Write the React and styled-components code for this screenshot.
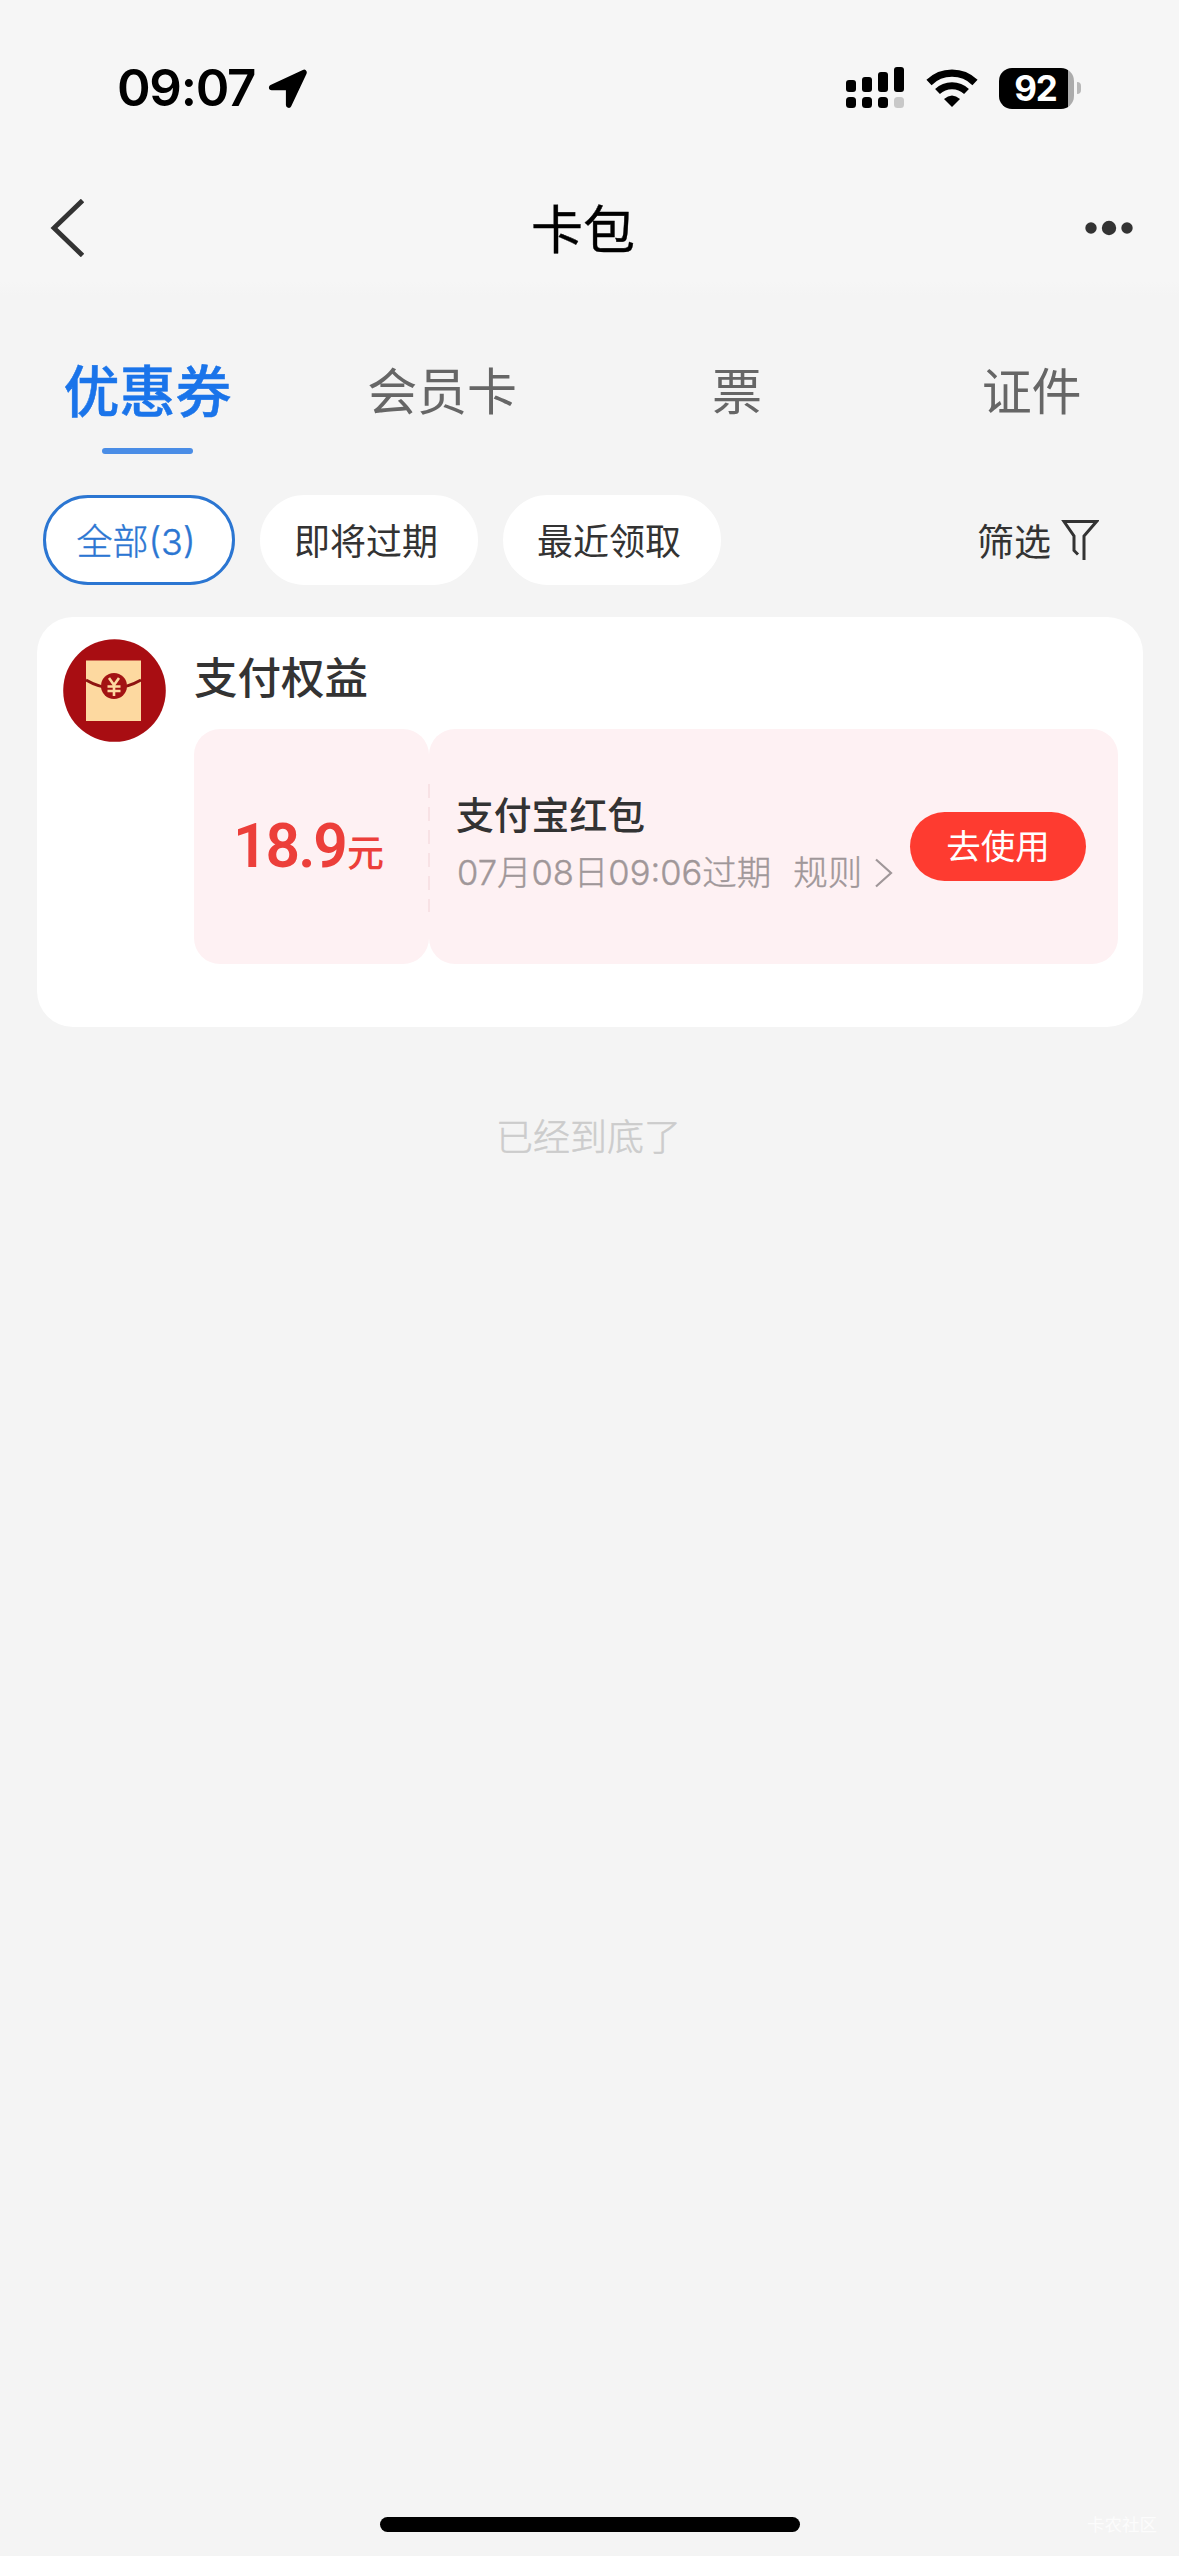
import styled, { createGlobalStyle } from "styled-components"

const tabs = ["优惠券", "会员卡", "票", "证件"]
const filters = ["全部(3)", "即将过期", "最近领取"]

const App = () => {
  return (
    <>
      <GlobalStyle />
      <Page>
        {/* Status bar */}
        <StatusBar>
          <Clock>09:07</Clock>
          <LocationIcon />
          <StatusRight>
            <SignalIcon />
            <WifiIcon />
            <Battery>
              <span>92</span>
            </Battery>
            <BatteryCap />
          </StatusRight>
        </StatusBar>

        {/* Title bar */}
        <NavBar>
          <svg width="34" height="58" viewBox="0 0 34 58" fill="none">
            <path d="M32.500 1.500L4 29L32.500 56.500" stroke="#333" strokeWidth="4.800" />
          </svg>
          <h1>卡包</h1>
          <svg width="50" height="16" viewBox="0 0 50 16" fill="#333">
            <circle cx="7" cy="8" r="5.700" />
            <circle cx="25" cy="8" r="7.200" />
            <circle cx="43" cy="8" r="5.700" />
          </svg>
        </NavBar>

        {/* Category tabs */}
        <Tabs>
          {tabs.map((tab, i) => (
            <Tab key={tab} $active={i === 0}>
              {tab}
            </Tab>
          ))}
        </Tabs>

        {/* Filter pills */}
        <Filters>
          {filters.map((name, i) => (
            <Pill key={name} $active={i === 0}>
              {name}
            </Pill>
          ))}
          <FilterButton>
            筛选
            <svg width="38" height="42" viewBox="0 0 38 42" fill="none">
              <path
                d="M17 35.500L13 31.500V17L3 2.500H35.500L23 17V41"
                stroke="#333"
                strokeWidth="3"
              />
            </svg>
          </FilterButton>
        </Filters>

        {/* Coupon card */}
        <Card>
          <EnvelopeLogo />
          <CardBody>
            <h2>支付权益</h2>
            <Coupon>
              <Amount>
                18.9<small>元</small>
              </Amount>
              <Detail>
                <Info>
                  <h3>支付宝红包</h3>
                  <Expiry>
                    <span>07月08日09:06过期</span>
                    <span>规则</span>
                    <svg width="20" height="30" viewBox="0 0 20 30" fill="none">
                      <path d="M2 1.500L17 15L2 28.500" stroke="#a09799" strokeWidth="2.200" />
                    </svg>
                  </Expiry>
                </Info>
                <UseButton>去使用</UseButton>
              </Detail>
            </Coupon>
          </CardBody>
        </Card>

        <EndNote>已经到底了</EndNote>

        <BottomBar>
          <HomeIndicator />
          <Mark>卡农社区</Mark>
        </BottomBar>
      </Page>
    </>
  )
}

const LocationIcon = () => (
  <svg width="40" height="41" viewBox="0 0 40 41">
    <path
      d="M3.700 19.500L36 4.500L20.700 37V19.500Z"
      fill="#000"
      stroke="#000"
      strokeWidth="5.600"
      strokeLinejoin="round"
    />
  </svg>
)

const SignalIcon = () => (
  <svg width="58" height="42" viewBox="0 0 58 42">
    <rect x="0" y="13" width="10" height="12" rx="3" />
    <rect x="16" y="10" width="10" height="15" rx="3" />
    <rect x="32" y="5" width="10" height="20" rx="3" />
    <rect x="48" y="0" width="10" height="25" rx="3" />
    <rect x="0" y="30" width="10" height="11" rx="3.500" />
    <rect x="16" y="30" width="10" height="11" rx="3.500" />
    <rect x="32" y="30" width="10" height="11" rx="3.500" />
    <rect x="48" y="30" width="10" height="11" rx="3.500" fill="#c8c8c8" />
  </svg>
)

const WifiIcon = () => (
  <svg width="52" height="38" viewBox="0 0 52 38" fill="none">
    <path d="M3 13.500A33 33 0 0 1 49 13.500" stroke="#000" strokeWidth="7.400" />
    <path d="M11.500 22.500A21 21 0 0 1 40.500 22.500" stroke="#000" strokeWidth="7" />
    <path d="M26 38L18 30Q26 23 34 30Z" fill="#000" />
  </svg>
)

const EnvelopeLogo = () => (
  <svg width="103" height="103" viewBox="0 0 103 103">
    <circle cx="51.500" cy="51.500" r="51.300" fill="#a80d12" />
    <rect x="23" y="21.500" width="55" height="60.500" fill="#fdd9a0" />
    <path d="M23 41Q50 57 78 41" fill="none" stroke="#8e1410" strokeWidth="3" />
    <circle cx="51" cy="47" r="13" fill="#a31313" />
    <path
      d="M46 39L51 46L56 39M51 46V57M44.500 47.500H57.500M44.500 52H57.500"
      fill="none"
      stroke="#fdd9a0"
      strokeWidth="2.600"
    />
  </svg>
)

const GlobalStyle = createGlobalStyle`
  * {
    box-sizing: border-box;
    margin: 0;
    padding: 0;
  }

  body {
    background: #f4f4f4;
    font-family: Inter, "Noto Sans CJK SC", sans-serif;
    color: #333;
  }

  svg {
    display: block;
    flex-shrink: 0;
  }
`

const Page = styled.main`
  display: flex;
  flex-direction: column;
  width: 1179px;
  height: 2556px;
  overflow: hidden;
`

const StatusBar = styled.div`
  display: flex;
  align-items: center;
  height: 169px;
  padding: 7px 98px 0 117px;
  background: #f6f6f6;
  color: #000;
`

const Clock = styled.div`
  width: 151px;
  font-size: 51px;
  font-weight: 600;
  line-height: 60px;
  letter-spacing: -1.3px;
`

const StatusRight = styled.div`
  display: flex;
  align-items: center;
  margin-left: auto;

  svg + svg {
    margin: 0 21px 0 22px;
  }
`

const Battery = styled.div`
  width: 75px;
  height: 41px;
  border-radius: 13px;
  background: linear-gradient(90deg, #000 69px, #acacac 69px);

  span {
    display: block;
    width: 73px;
    text-align: center;
    color: #fff;
    font-size: 35px;
    font-weight: 700;
    line-height: 41px;
    letter-spacing: -1.2px;
  }
`

const BatteryCap = styled.div`
  width: 4px;
  height: 12px;
  margin-left: 3px;
  border-radius: 0 4px 4px 0;
  background: #b8b8b8;
`

const NavBar = styled.header`
  display: flex;
  align-items: center;
  justify-content: space-between;
  height: 127px;
  padding: 0 45px 9px 50px;
  background: linear-gradient(#f6f6f6 112px, #f4f4f4);

  h1 {
    padding: 5px 2px 0 0;
    color: #000;
    font-size: 52px;
    font-weight: 400;
    line-height: 60px;
    -webkit-text-stroke: 0.4px #000;
  }
`

const Tabs = styled.nav`
  display: grid;
  grid-template-columns: repeat(4, 1fr);
  padding-top: 38px;
`

const Tab = styled.div`
  display: flex;
  flex-direction: column;
  align-items: center;
  padding-top: 1px;
  color: ${({ $active }) => ($active ? "#1a74ea" : "#666")};
  font-size: ${({ $active }) => ($active ? "56px" : "50px")};
  font-weight: ${({ $active }) => ($active ? 500 : 400)};
  line-height: 114px;
  -webkit-text-stroke: ${({ $active }) => ($active ? "0.5px" : "0")} #1a74ea;

  &::after {
    content: "";
    width: 91px;
    height: 6px;
    margin-top: -1px;
    border-radius: 3px;
    background: ${({ $active }) => ($active ? "#4a8de6" : "transparent")};
  }
`

const Filters = styled.div`
  display: flex;
  align-items: center;
  gap: 25px;
  margin-top: 41px;
  padding: 0 80px 0 43px;
`

const Pill = styled.div`
  display: flex;
  align-items: center;
  justify-content: center;
  width: ${({ $active }) => ($active ? "192px" : "218px")};
  height: 90px;
  padding: 0 6px 2px 0;
  border: 3px solid ${({ $active }) => ($active ? "#2b76d2" : "#fff")};
  border-radius: 45px;
  background: #fff;
  color: ${({ $active }) => ($active ? "#2b76d2" : "#333")};
  font-size: 36px;
  font-weight: ${({ $active }) => ($active ? 300 : 400)};
  -webkit-text-stroke: ${({ $active }) => ($active ? "0.4px" : "0")} #2b76d2;
`

const FilterButton = styled.div`
  display: flex;
  align-items: center;
  gap: 10px;
  margin-left: auto;
  padding-bottom: 1px;
  font-size: 37px;
`

const Card = styled.section`
  display: flex;
  align-items: flex-start;
  width: 1106px;
  height: 410px;
  margin: 32px 0 0 37px;
  padding: 22px 25px 0 26px;
  border-radius: 36px;
  background: #fff;
`

const CardBody = styled.div`
  flex: 1;
  margin-left: 28px;

  h2 {
    height: 90px;
    font-size: 43.500px;
    font-weight: 500;
    line-height: 79px;
  }
`

const Coupon = styled.div`
  display: flex;
`

const Amount = styled.div`
  display: flex;
  align-items: baseline;
  justify-content: center;
  width: 235px;
  height: 235px;
  padding-right: 8px;
  border-radius: 26px;
  background: #fef1f3;
  color: #ec3f3a;
  font-family: Roboto, "Noto Sans CJK SC", sans-serif;
  font-size: 60.500px;
  font-weight: 600;
  line-height: 235px;
  letter-spacing: -2px;

  small {
    margin-left: 1px;
    font-size: 37px;
    font-weight: 500;
  }
`

const Detail = styled.div`
  position: relative;
  display: flex;
  align-items: center;
  justify-content: space-between;
  flex: 1;
  height: 235px;
  padding: 0 32px 0 27px;
  border-radius: 26px;
  background: #fef1f3;

  /* perforation over the seam between the two halves */
  &::before {
    content: "";
    position: absolute;
    left: -1px;
    top: 55px;
    width: 2px;
    height: 128px;
    background: repeating-linear-gradient(#f8e2e5 0 14px, transparent 14px 23px);
  }
`

const Info = styled.div`
  padding-bottom: 5px;

  h3 {
    font-size: 37.800px;
    font-weight: 500;
    line-height: 57px;
  }
`

const Expiry = styled.div`
  display: flex;
  align-items: center;
  padding-left: 1px;
  color: #a09799;
  font-size: 34.500px;
  font-weight: 300;
  line-height: 57px;
  -webkit-text-stroke: 0.4px #a09799;

  span + span {
    margin: 0 12px 0 22px;
  }
`

const UseButton = styled.button`
  width: 176px;
  height: 69px;
  border: 0;
  border-radius: 35px;
  background: #fe3b30;
  color: #fff;
  font-family: inherit;
  font-size: 34.500px;
  line-height: 69px;
`

const EndNote = styled.p`
  margin: 82px 2px 0 0;
  text-align: center;
  color: #ccc;
  font-size: 37px;
  font-weight: 300;
  line-height: 58px;
  -webkit-text-stroke: 0.5px #ccc;
`

const BottomBar = styled.footer`
  display: grid;
  grid-template-columns: 1fr 420px 1fr;
  align-items: center;
  margin-top: auto;
  height: 39px;
  margin-bottom: 12px;
`

const HomeIndicator = styled.div`
  grid-column: 2;
  height: 15px;
  border-radius: 8px;
  background: #000;
`

const Mark = styled.span`
  justify-self: end;
  margin-right: 22px;
  color: #fcfcfc;
  font-size: 17.500px;
  line-height: 20px;
`

export default App
